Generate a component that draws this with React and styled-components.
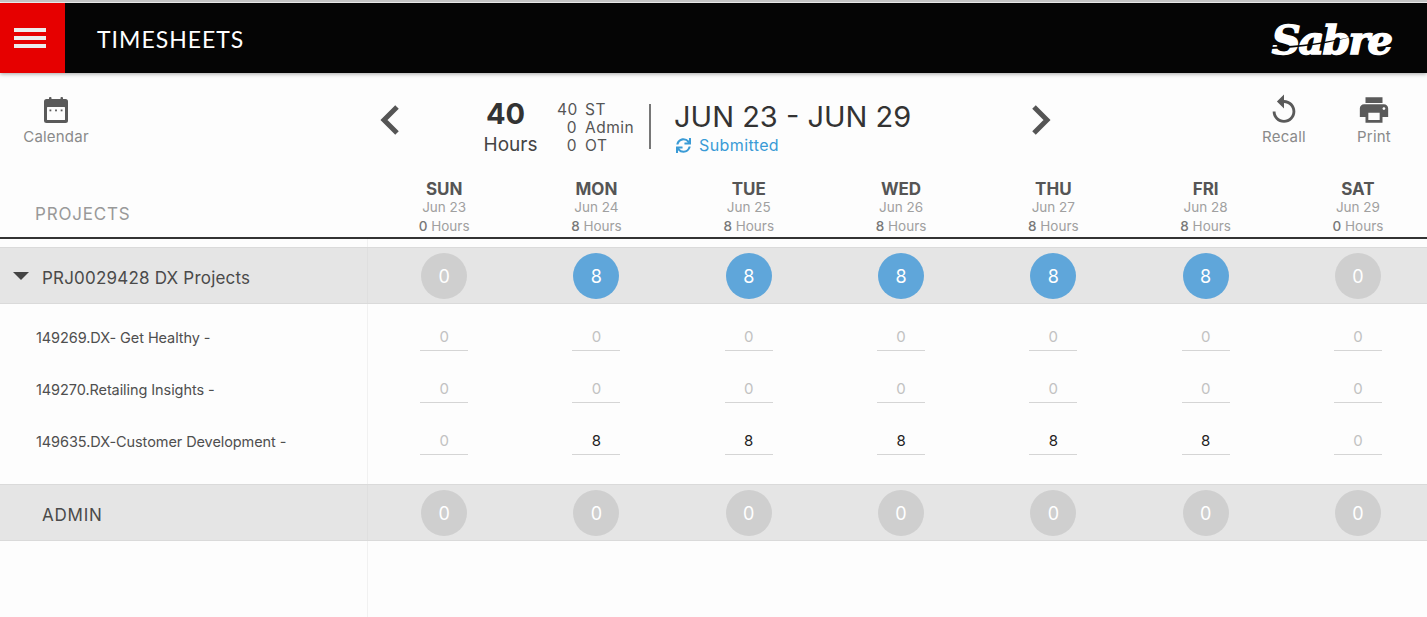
import styled, { createGlobalStyle } from "styled-components";
import { MdReplay, MdPrint } from "react-icons/md";
import { FaSync } from "react-icons/fa";

const days = [
  { name: "SUN", date: "Jun 23", hours: 0 },
  { name: "MON", date: "Jun 24", hours: 8 },
  { name: "TUE", date: "Jun 25", hours: 8 },
  { name: "WED", date: "Jun 26", hours: 8 },
  { name: "THU", date: "Jun 27", hours: 8 },
  { name: "FRI", date: "Jun 28", hours: 8 },
  { name: "SAT", date: "Jun 29", hours: 0 },
];

const tasks = [
  { name: "149269.DX- Get Healthy -", values: [0, 0, 0, 0, 0, 0, 0] },
  { name: "149270.Retailing Insights -", values: [0, 0, 0, 0, 0, 0, 0] },
  { name: "149635.DX-Customer Development -", values: [0, 8, 8, 8, 8, 8, 0] },
];

const GlobalStyle = createGlobalStyle`
  html, body {
    margin: 0;
    height: 100%;
    background: #fdfdfd;
    overflow: hidden;
  }
  body {
    font-family: "Inter", "Noto Sans", sans-serif;
  }
`;

const Page = styled.div`
  width: 1427px;
  height: 617px;
  overflow: hidden;
  background: #fdfdfd;
  border-top: 2px solid #c4c4c4;
  box-sizing: border-box;
`;

const TopBar = styled.header`
  display: flex;
  align-items: center;
  height: 70px;
  margin-top: 1px;
  background: #050505;
  box-shadow: 0 1px 4px rgba(0, 0, 0, 0.35);
`;

const MenuButton = styled.div`
  display: flex;
  flex-direction: column;
  justify-content: center;
  gap: 4px;
  width: 65px;
  height: 100%;
  padding: 0 19px 0 14px;
  box-sizing: border-box;
  background: #e60000;
`;

const MenuBar = styled.span`
  display: block;
  height: 4px;
  background: #ececec;
`;

const AppTitle = styled.h1`
  margin: 2px 0 0 32px;
  font-family: "Lato", sans-serif;
  font-size: 23px;
  font-weight: 400;
  letter-spacing: 1px;
  color: #fff;
`;

const Logo = styled.div`
  position: relative;
  margin-left: auto;
  margin-right: 36px;
  margin-top: 3px;
  font-family: "DejaVu Serif", serif;
  font-size: 40px;
  font-weight: 900;
  font-style: italic;
  letter-spacing: -2px;
  line-height: 1;
  color: #fff;
  -webkit-text-stroke: 1.5px #fff;
`;

const LogoSlash = styled.svg`
  position: absolute;
  left: -2px;
  top: 12px;
`;

const Toolbar = styled.section`
  display: flex;
  align-items: flex-start;
  height: 98px;
`;

const Tool = styled.div`
  display: flex;
  flex-direction: column;
  align-items: center;
  width: ${(p) => p.$width}px;
  margin-left: ${(p) => p.$left}px;
  padding-top: ${(p) => p.$top}px;
  font-size: 15px;
  letter-spacing: 0.2px;
  color: #8a8a8a;
  svg {
    display: block;
  }
`;

const ToolLabel = styled.span`
  margin-top: ${(p) => p.$gap}px;
  line-height: 20px;
`;

const Chevron = styled.svg`
  flex: none;
  margin-left: ${(p) => p.$left}px;
  margin-top: 31px;
`;

const TotalBlock = styled.div`
  display: flex;
  flex-direction: column;
  align-items: center;
  width: 53px;
  margin-left: 82px;
  padding-top: 23px;
`;

const TotalValue = styled.span`
  margin-right: 10px;
  font-size: 29px;
  font-weight: 700;
  line-height: 36px;
  color: #333;
`;

const TotalLabel = styled.span`
  font-size: 19px;
  line-height: 26px;
  color: #444;
`;

const Breakdown = styled.div`
  display: grid;
  grid-template-columns: 20px 50px;
  column-gap: 8px;
  margin-left: 20px;
  margin-top: 28px;
  font-size: 15.5px;
  line-height: 18px;
  letter-spacing: 0.5px;
  color: #555;
`;

const BreakdownValue = styled.span`
  text-align: right;
`;

const Divider = styled.div`
  width: 2px;
  height: 45px;
  margin-left: 14px;
  margin-top: 31px;
  background: #777;
`;

const DateBlock = styled.div`
  width: 340px;
  margin-left: 23px;
  padding-top: 24px;
`;

const DateRange = styled.div`
  font-size: 29px;
  font-weight: 400;
  line-height: 39px;
  color: #333;
  white-space: nowrap;
`;

const Status = styled.div`
  display: flex;
  align-items: center;
  gap: 8px;
  margin-left: 2px;
  font-size: 16px;
  line-height: 18px;
  letter-spacing: 0.4px;
  color: #3a9bd6;
`;

const Grid = styled.div`
  display: grid;
  grid-template-columns: 368px repeat(7, 152.3px);
`;

const HeaderRow = styled(Grid)`
  height: 68px;
  box-sizing: border-box;
  border-bottom: 2px solid #333;
`;

const ProjectsLabel = styled.div`
  padding: 33px 0 0 35px;
  font-size: 17px;
  line-height: 20px;
  letter-spacing: 0.8px;
  color: #999;
`;

const DayHead = styled.div`
  padding-top: 8px;
  text-align: center;
`;

const DayName = styled.div`
  font-size: 17px;
  font-weight: 700;
  line-height: 20px;
  color: #555;
`;

const DayDate = styled.div`
  font-size: 13.5px;
  line-height: 17px;
  color: #a0a0a0;
`;

const DayHours = styled.div`
  font-size: 13.5px;
  line-height: 20px;
  color: #a0a0a0;
  b {
    font-weight: 500;
    color: #777;
  }
`;

const Spacer = styled.div`
  width: 368px;
  height: 8px;
  box-sizing: border-box;
  border-right: 1px solid #f1f1f1;
`;

const BandRow = styled(Grid)`
  height: 57px;
  box-sizing: border-box;
  background: #e5e5e5;
  border-top: 1px solid #dadada;
  border-bottom: 1px solid #dadada;
`;

const BandLabel = styled.div`
  display: flex;
  align-items: center;
  padding-left: ${(p) => (p.$indent ? 42 : 13)}px;
  padding-top: 5px;
  border-right: 1px solid #dfdfdf;
  font-size: 17px;
  letter-spacing: ${(p) => (p.$indent ? 0.8 : 0.2)}px;
  color: #4a4a4a;
  white-space: nowrap;
`;

const Caret = styled.span`
  width: 0;
  height: 0;
  margin-right: 13px;
  margin-top: -5px;
  border-left: 8px solid transparent;
  border-right: 8px solid transparent;
  border-top: 8px solid #444;
`;

const BandCell = styled.div`
  display: flex;
  align-items: center;
  justify-content: center;
  padding-top: 1px;
`;

const Badge = styled.div`
  display: flex;
  align-items: center;
  justify-content: center;
  width: 46px;
  height: 46px;
  border-radius: 50%;
  background: ${(p) => (p.$active ? "#5fa6da" : "#cfcfcf")};
  font-size: 18px;
  color: #fff;
`;

const TaskList = styled.div`
  display: grid;
  grid-auto-rows: 52px;
  width: 1435px;
  padding: 8px 0 16px;
  background: linear-gradient(#f1f1f1, #f1f1f1) 367px 0 / 1px 100% no-repeat;
`;

const TaskRow = styled(Grid)``;

const TaskName = styled.div`
  display: flex;
  align-items: center;
  padding-left: 36px;
  padding-bottom: 2px;
  font-size: 14.5px;
  letter-spacing: -0.08px;
  color: #4f4f4f;
  white-space: nowrap;
`;

const TaskCell = styled.div`
  display: flex;
  justify-content: center;
  padding-top: 13px;
`;

const HourInput = styled.div`
  width: 48px;
  height: 26px;
  box-sizing: border-box;
  border-bottom: 1px solid #d5d5d5;
  font-size: 15px;
  line-height: 24px;
  text-align: center;
  color: ${(p) => (p.$filled ? "#222" : "#c2c2c2")};
`;

const Rail = styled.div`
  width: 368px;
  height: 77px;
  box-sizing: border-box;
  border-right: 1px solid #f1f1f1;
`;

const CalendarIcon = () => (
  <svg width="26" height="26" viewBox="0 0 26 26" fill="none">
    <rect x="1" y="2" width="24" height="24" rx="2.5" fill="#5a5a5a" />
    <rect x="4" y="10" width="18" height="13" rx="0.5" fill="#fdfdfd" />
    <rect x="6" y="0" width="2.5" height="4" rx="1" fill="#5a5a5a" />
    <rect x="17.5" y="0" width="2.5" height="4" rx="1" fill="#5a5a5a" />
    <rect x="6.5" y="12.5" width="1.8" height="1.8" fill="#5a5a5a" />
    <rect x="12.1" y="12.5" width="1.8" height="1.8" fill="#5a5a5a" />
    <rect x="17.7" y="12.5" width="1.8" height="1.8" fill="#5a5a5a" />
  </svg>
);

const PrevIcon = ({ left }) => (
  <Chevron $left={left} width="24" height="32" viewBox="0 0 24 32" fill="none">
    <path d="M19 3 L6 16 L19 29" stroke="#555" strokeWidth="5" />
  </Chevron>
);

const NextIcon = ({ left }) => (
  <Chevron $left={left} width="24" height="32" viewBox="0 0 24 32" fill="none">
    <path d="M5 3 L18 16 L5 29" stroke="#555" strokeWidth="5" />
  </Chevron>
);

export default function App() {
  return (
    <>
      <GlobalStyle />
      <Page>
        <TopBar>
          <MenuButton>
            <MenuBar />
            <MenuBar />
            <MenuBar />
          </MenuButton>
          <AppTitle>TIMESHEETS</AppTitle>
          <Logo>
            Sabre
            <LogoSlash width="130" height="20" viewBox="0 0 130 20">
              <path d="M0 15 C30 14 60 10 84 4 C62 11 30 16 0 17 Z" fill="#050505" />
            </LogoSlash>
          </Logo>
        </TopBar>

        <Toolbar>
          <Tool $width={80} $left={16} $top={24}>
            <CalendarIcon />
            <ToolLabel $gap={4}>Calendar</ToolLabel>
          </Tool>
          <PrevIcon left={282} />
          <TotalBlock>
            <TotalValue>40</TotalValue>
            <TotalLabel>Hours</TotalLabel>
          </TotalBlock>
          <Breakdown>
            <BreakdownValue>40</BreakdownValue>
            <span>ST</span>
            <BreakdownValue>0</BreakdownValue>
            <span>Admin</span>
            <BreakdownValue>0</BreakdownValue>
            <span>OT</span>
          </Breakdown>
          <Divider />
          <DateBlock>
            <DateRange>JUN 23 - JUN 29</DateRange>
            <Status>
              <FaSync size={15} />
              Submitted
            </Status>
          </DateBlock>
          <NextIcon left={15} />
          <Tool $width={70} $left={196} $top={20}>
            <MdReplay size={34} color="#5a5a5a" />
            <ToolLabel $gap={0}>Recall</ToolLabel>
          </Tool>
          <Tool $width={70} $left={20} $top={20}>
            <MdPrint size={34} color="#5a5a5a" />
            <ToolLabel $gap={0}>Print</ToolLabel>
          </Tool>
        </Toolbar>

        <HeaderRow>
          <ProjectsLabel>PROJECTS</ProjectsLabel>
          {days.map((day) => (
            <DayHead key={day.name}>
              <DayName>{day.name}</DayName>
              <DayDate>{day.date}</DayDate>
              <DayHours>
                <b>{day.hours}</b> Hours
              </DayHours>
            </DayHead>
          ))}
        </HeaderRow>

        <Spacer />
        <BandRow>
          <BandLabel>
            <Caret />
            PRJ0029428 DX Projects
          </BandLabel>
          {days.map((day) => (
            <BandCell key={day.name}>
              <Badge $active={day.hours > 0}>{day.hours}</Badge>
            </BandCell>
          ))}
        </BandRow>

        <TaskList>
          {tasks.map((task) => (
            <TaskRow key={task.name}>
              <TaskName>{task.name}</TaskName>
              {task.values.map((value, i) => (
                <TaskCell key={i}>
                  <HourInput $filled={value > 0}>{value}</HourInput>
                </TaskCell>
              ))}
            </TaskRow>
          ))}
        </TaskList>

        <BandRow>
          <BandLabel $indent>ADMIN</BandLabel>
          {days.map((day) => (
            <BandCell key={day.name}>
              <Badge>0</Badge>
            </BandCell>
          ))}
        </BandRow>
        <Rail />
      </Page>
    </>
  );
}
